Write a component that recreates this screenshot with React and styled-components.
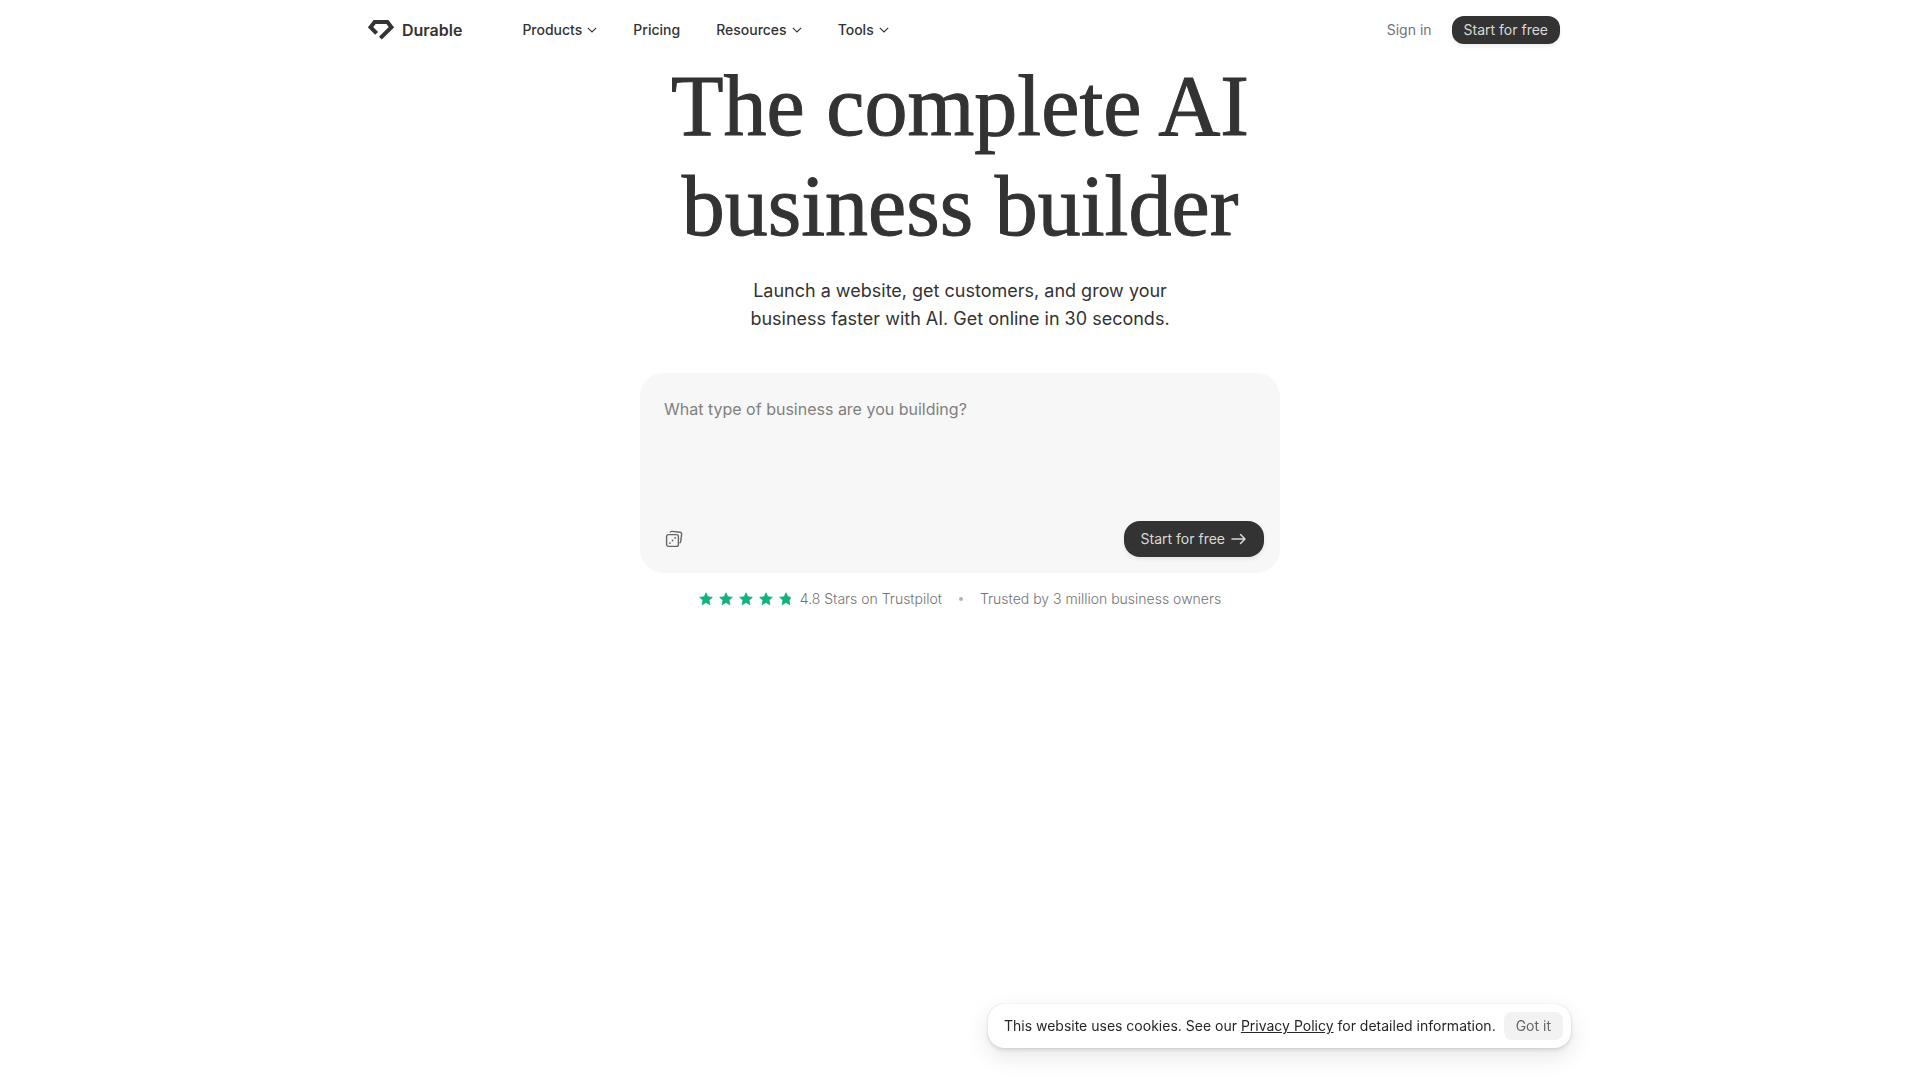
import React, { useState } from "react";
import styled, { createGlobalStyle } from "styled-components";

const menu = [
  { label: "Products", hasMenu: true },
  { label: "Pricing", hasMenu: false },
  { label: "Resources", hasMenu: true },
  { label: "Tools", hasMenu: true },
];

function LogoMark() {
  return (
    <svg width="26" height="20" viewBox="0 0 26 20" fill="none" aria-hidden="true">
      <path
        d="M8.6 13.4 2.6 7.2 6.6 2H19.4l4 5.2L12.4 18.2"
        stroke="#333"
        strokeWidth="4"
      />
    </svg>
  );
}

function Chevron() {
  return (
    <svg width="10" height="6" viewBox="0 0 10 6" fill="none" aria-hidden="true">
      <path d="m.8.8 4.2 4.2L9.2.8" stroke="currentColor" strokeWidth="1.1" />
    </svg>
  );
}

function Dice() {
  return (
    <svg width="18" height="18" viewBox="0 0 18 18" fill="none" aria-hidden="true">
      <rect x="1.6" y="4.6" width="11.8" height="11.8" rx="2" stroke="currentColor" strokeWidth="1.4" />
      <path
        d="M5.2 2.6c.3-.9.9-1.3 1.8-1.2l8 .9c1.1.1 1.8.9 1.6 2l-.9 7.2c-.1.8-.5 1.3-1.1 1.5"
        stroke="currentColor"
        strokeWidth="1.4"
      />
      <circle cx="4.9" cy="13.1" r=".9" fill="currentColor" />
      <circle cx="7.5" cy="10.5" r=".9" fill="currentColor" />
      <circle cx="10.1" cy="7.9" r=".9" fill="currentColor" />
    </svg>
  );
}

function Arrow() {
  return (
    <svg width="16" height="12" viewBox="0 0 16 12" fill="none" aria-hidden="true">
      <path d="M1 6h13M9.5 1.5 14 6l-4.5 4.5" stroke="currentColor" strokeWidth="1.5" strokeLinecap="round" strokeLinejoin="round" />
    </svg>
  );
}

function Star({ partial }) {
  return (
    <svg width="14" height="14" viewBox="0 0 14 14" aria-hidden="true">
      <clipPath id="partialStar">
        <rect width="11.6" height="14" />
      </clipPath>
      <path
        clipPath={partial ? "url(#partialStar)" : undefined}
        d="M7 .8l1.8 4 4.5.5-3.3 3 .9 4.4L7 10.5l-3.9 2.2.9-4.4-3.3-3 4.5-.5z"
        fill="#0fb37b"
        stroke="#0fb37b"
        strokeWidth=".8"
        strokeLinejoin="round"
      />
    </svg>
  );
}

function App() {
  const [business, setBusiness] = useState("");
  const [showCookies, setShowCookies] = useState(true);

  return (
    <>
      <GlobalStyle />
      <Header>
        <HeaderInner>
          <Logo href="#">
            <LogoMark />
            <span>Durable</span>
          </Logo>
          <Nav>
            {menu.map((item) =>
              item.hasMenu ? (
                <NavButton key={item.label} type="button">
                  {item.label}
                  <Chevron />
                </NavButton>
              ) : (
                <NavLink key={item.label} href="#">
                  {item.label}
                </NavLink>
              )
            )}
          </Nav>
          <Account>
            <SignIn href="#">Sign in</SignIn>
            <DarkButton type="button">Start for free</DarkButton>
          </Account>
        </HeaderInner>
      </Header>

      <Hero>
        <Title>
          The complete AI
          <br />
          business builder
        </Title>
        <Subtitle>
          Launch a website, get customers, and grow your business faster with
          AI. Get online in 30 seconds.
        </Subtitle>
        <Prompt onSubmit={(e) => e.preventDefault()}>
          <PromptInput
            aria-label="What type of business are you building?"
            placeholder="What type of business are you building?"
            value={business}
            onChange={(e) => setBusiness(e.target.value)}
          />
          <PromptActions>
            <DiceButton type="button" aria-label="Random business">
              <Dice />
            </DiceButton>
            <SubmitButton type="submit">
              Start for free
              <Arrow />
            </SubmitButton>
          </PromptActions>
        </Prompt>
        <Proof>
          <Rating>
            <Stars>
              <Star />
              <Star />
              <Star />
              <Star />
              <Star partial />
            </Stars>
            <span>4.8 Stars on Trustpilot</span>
          </Rating>
          <Dot />
          <span>Trusted by 3 million business owners</span>
        </Proof>
      </Hero>

      {showCookies && (
        <CookieArea>
          <CookieBar>
            <p>
              This website uses cookies. See our{" "}
              <a href="#">Privacy Policy</a> for detailed information.
            </p>
            <GotIt type="button" onClick={() => setShowCookies(false)}>
              Got it
            </GotIt>
          </CookieBar>
        </CookieArea>
      )}
    </>
  );
}

const GlobalStyle = createGlobalStyle`
  * {
    box-sizing: border-box;
  }

  body {
    margin: 0;
    background: #fff;
    color: #333;
    font-family: Inter, "Liberation Sans", sans-serif;
    font-size: 14px;
    line-height: 20px;
  }

  button, textarea {
    font: inherit;
    color: inherit;
    border: none;
    background: none;
    padding: 0;
  }

  button {
    cursor: pointer;
  }

  a {
    color: inherit;
    text-decoration: none;
  }

  p, h1 {
    margin: 0;
  }
`;

const Header = styled.header`
  display: flex;
  justify-content: center;
  padding: 0 24px;
`;

const HeaderInner = styled.div`
  display: flex;
  align-items: center;
  width: 100%;
  max-width: 1200px;
  height: 60px;
  padding-left: 8px;
`;

const Logo = styled.a`
  display: flex;
  align-items: center;
  gap: 8px;
  font-size: 16px;
  font-weight: 600;
`;

const Nav = styled.nav`
  display: flex;
  align-items: center;
  gap: 36px;
  margin-left: 60px;
  font-weight: 500;
`;

const NavLink = styled.a`
  display: flex;
  align-items: center;
`;

const NavButton = styled.button`
  display: flex;
  align-items: center;
  gap: 5px;
`;

const Account = styled.div`
  display: flex;
  align-items: center;
  gap: 20px;
  margin-left: auto;
`;

const SignIn = styled.a`
  color: #737373;
`;

const DarkButton = styled.button`
  height: 28px;
  padding: 0 12px;
  border-radius: 12px;
  background: #333;
  color: #d9d9d9;
  box-shadow: 0 2px 4px rgba(0, 0, 0, 0.08);
`;

const SubmitButton = styled(DarkButton)`
  display: flex;
  align-items: center;
  gap: 6px;
  height: 36px;
  padding: 0 17px;
  border-radius: 16px;
`;

const Hero = styled.main`
  display: flex;
  flex-direction: column;
  align-items: center;
  margin-top: -4px;
  padding: 0 24px;
`;

const Title = styled.h1`
  font-family: "Liberation Serif", serif;
  font-size: 86px;
  font-weight: 400;
  line-height: 100px;
  text-align: center;
  -webkit-text-stroke: 1px #333;
`;

const Subtitle = styled.p`
  max-width: 440px;
  margin-top: 21px;
  font-size: 18px;
  line-height: 28px;
  text-align: center;
`;

const Prompt = styled.form`
  display: flex;
  flex-direction: column;
  width: 100%;
  max-width: 640px;
  min-height: 200px;
  margin-top: 40px;
  border-radius: 24px;
  background: #f7f7f7;
`;

const PromptInput = styled.textarea`
  flex: 1;
  padding: 24px 24px 0;
  font-size: 16px;
  line-height: 24px;
  resize: none;
  outline: none;

  &::placeholder {
    color: #808080;
  }
`;

const PromptActions = styled.div`
  display: flex;
  align-items: center;
  justify-content: space-between;
  padding: 0 16px 16px 25px;
`;

const DiceButton = styled.button`
  display: flex;
  color: #666;
`;

const Proof = styled.div`
  display: flex;
  align-items: center;
  gap: 17px;
  margin-top: 16px;
  color: #737373;
  font-weight: 300;
`;

const Rating = styled.div`
  display: flex;
  align-items: center;
  gap: 7px;
`;

const Stars = styled.div`
  display: flex;
  gap: 6px;
`;

const Dot = styled.span`
  width: 4px;
  height: 4px;
  border-radius: 50%;
  background: #b3b3b3;
`;

const CookieArea = styled.div`
  position: fixed;
  left: 0;
  right: 0;
  bottom: 32px;
  display: flex;
  justify-content: flex-end;
  max-width: 1222px;
  margin: 0 auto;
`;

const CookieBar = styled.div`
  display: flex;
  align-items: center;
  gap: 8px;
  padding: 8px 8px 8px 16px;
  border-radius: 16px;
  background: #fff;
  color: #262626;
  box-shadow: 0 0 1px rgba(0, 0, 0, 0.2), 0 2px 4px rgba(0, 0, 0, 0.12),
    0 8px 24px rgba(0, 0, 0, 0.1);

  a {
    text-decoration: underline;
  }
`;

const GotIt = styled.button`
  height: 28px;
  padding: 0 12px;
  border-radius: 8px;
  background: #f2f2f2;
  color: #666;
`;

export default App;
